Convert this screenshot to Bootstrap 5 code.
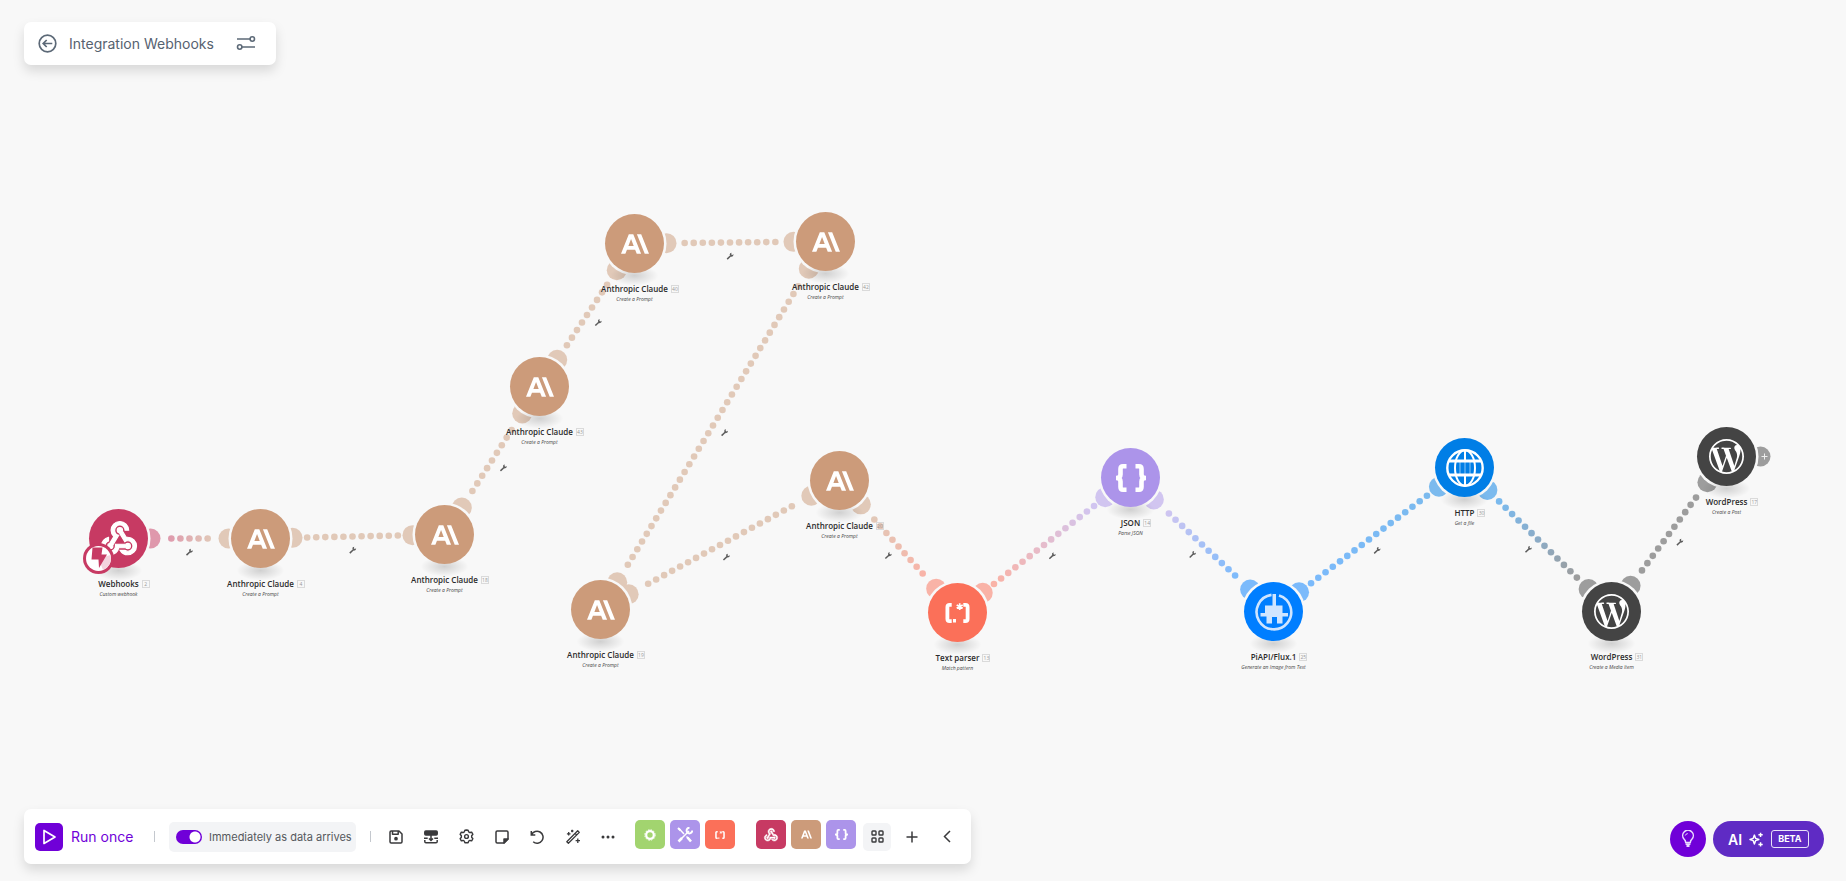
<!DOCTYPE html>
<html lang="en">
<head>
<meta charset="utf-8">
<meta name="viewport" content="width=device-width, initial-scale=1">
<title>Integration Webhooks</title>
<link rel="stylesheet" href="https://cdn.jsdelivr.net/npm/bootstrap@5.3.0/dist/css/bootstrap.min.css">
<style>
  :root { --canvas: #f8f8f8; --violet: #7000d8; --ink: #3a3a3c; }
  body { background: var(--canvas); font-family: Inter, sans-serif; color: var(--ink); }
  button { font: inherit; }
  .app { padding: 22px 22px 17px 24px; pointer-events: none; }
  .app > * { pointer-events: auto; }
  .scene { inset: 0; overflow: hidden; }
  .panel { background: #fff; border-radius: 7px; box-shadow: 0 6px 12px rgba(0, 0, 0, .13); }
  .plain { background: none; border: 0; padding: 0; color: inherit; display: inline-flex; align-items: center; justify-content: center; }
  .plain svg, .tile svg { display: block; }

  .titlebar { height: 43px; padding: 0 20px 0 13px; color: #5c6977; }
  .titlebar h1 { font-size: 14px; line-height: 20px; font-weight: 400; color: #566270; margin: 0 22px 0 11px; }

  .toolbar { width: 947px; height: 55px; padding: 0 11px; }
  .run { width: 100px; color: var(--violet); font-size: 14px; line-height: 20px; gap: 8px; justify-content: flex-start; }
  .run-box { width: 28px; height: 28px; border-radius: 5px; background: var(--violet); color: #fff; }
  .rule { width: 1px; height: 11px; background: #c4c8ce; }
  .run + .rule { margin-left: 19px; }
  .sched { height: 30px; width: 187px; margin: 0 14px; padding: 0 7px; gap: 7px; border-radius: 5px; background: #f3f4f6; font-size: 11px; line-height: 16px; color: #55585c; }
  .sched .form-check-input { width: 26px; height: 14px; margin: 0; border: 0; background-color: var(--violet); flex: none;
    background-image: radial-gradient(circle at 19px 7px, #fff 5px, transparent 6px); background-size: 100% 100%; }
  .tools { width: 236px; margin: 0 15px 0 13px; }
  .tools .plain { width: 24px; height: 28px; }
  .tiles { gap: 5px; margin-top: -4px; }
  .tiles + .tiles { margin-left: 21px; }
  .tile { width: 30px; height: 29px; border: 0; border-radius: 5px; color: #fff; padding: 0; display: flex; align-items: center; justify-content: center; }
  .apps { width: 28px; height: 28px; margin: 0 7px; border-radius: 5px; background: #f3f4f6; }
  .add { width: 28px; height: 28px; }
  .fold { width: 20px; height: 28px; margin-right: 3px; }
  .c-green { background: #a2d46f; } .c-violet { background: #ac94ea; } .c-coral { background: #fb7059; }
  .c-pink { background: #c73a63; } .c-tan { background: #cc9b7a; }

  .corner { gap: 7px; padding-top: 12px; }
  .hint { width: 36px; height: 36px; border-radius: 18px; background: var(--violet); color: #fff; }
  .assist { height: 36px; width: 111px; padding: 0 15px; gap: 7px; border-radius: 18px; background: #5f2bc4; color: #fff; font-size: 14px; font-weight: 600; }
  .beta { width: 39px; height: 18px; border: 1px solid #e9e2f8; border-radius: 3px; font-size: 9px; line-height: 16px; font-weight: 700; }

  .mod { position: absolute; width: 59px; height: 59px; font-family: "Open Sans", sans-serif; }
  .disc { width: 59px; height: 59px; border-radius: 50%; border: 0; padding: 0; color: #fff; }
  .mod-name { font-size: 8px; line-height: 12px; font-weight: 600; color: #2b2b2b; margin-top: 10px; white-space: nowrap; position: relative; }
  .mod-no { position: absolute; left: 100%; top: 2px; margin-left: 3px; width: 8px; height: 8px; border: 1px solid #dadada; font-size: 5px; line-height: 6px; font-weight: 400; color: #999; display: flex; justify-content: center; }
  .mod-sub { font-size: 5px; line-height: 8px; font-style: italic; color: #444; white-space: nowrap; }
  .trigger { position: absolute; left: -6px; top: 34px; }
</style>
</head>
<body>

<svg width="0" height="0" class="position-absolute" aria-hidden="true">
  <symbol id="claude" viewBox="0 0 24 24"><path fill="currentColor" d="M17.304 3.541h-3.672l6.696 16.918H24Zm-10.608 0L0 20.459h3.744l1.37-3.553h7.005l1.369 3.553h3.744L10.536 3.541Zm-.371 10.223 2.291-5.946 2.292 5.946Z"/></symbol>
  <symbol id="webhook" viewBox="0 0 24 24"><path fill="currentColor" stroke="currentColor" stroke-width=".7" d="M10 15h5.88c.27-.31.67-.5 1.12-.5.83 0 1.5.67 1.5 1.5s-.67 1.5-1.5 1.5c-.44 0-.84-.19-1.12-.5H11.9c-.46 2.28-2.48 4-4.9 4-2.76 0-5-2.24-5-5 0-2.42 1.72-4.44 4-4.9v2.07c-1.16.41-2 1.53-2 2.83 0 1.65 1.35 3 3 3s3-1.35 3-3v-1zm2.5-11c1.65 0 3 1.35 3 3h2c0-2.76-2.24-5-5-5s-5 2.24-5 5c0 1.43.6 2.71 1.55 3.62l-2.35 3.9c-.68.14-1.2.75-1.2 1.48 0 .83.67 1.5 1.5 1.5s1.5-.67 1.5-1.5c0-.16-.02-.31-.07-.45l3.38-5.63C10.49 9.61 9.5 8.42 9.5 7c0-1.65 1.35-3 3-3zm4.5 9c-.64 0-1.23.2-1.72.54l-3.05-5.07C11.53 8.35 11 7.74 11 7c0-.83.67-1.5 1.5-1.5S14 6.17 14 7c0 .15-.02.29-.06.43l2.19 3.65c.28-.05.57-.08.87-.08 2.76 0 5 2.24 5 5s-2.24 5-5 5c-1.85 0-3.47-1.01-4.33-2.5h2.67c.48.32 1.05.5 1.66.5 1.65 0 3-1.35 3-3s-1.35-3-3-3z"/></symbol>
  <symbol id="wordpress" viewBox="0 0 24 24"><path fill="currentColor" d="M21.469 6.825c.84 1.537 1.318 3.3 1.318 5.175 0 3.979-2.156 7.456-5.363 9.325l3.295-9.527c.615-1.54.82-2.771.82-3.864 0-.405-.026-.78-.07-1.11m-7.981.105c.647-.03 1.232-.105 1.232-.105.582-.075.514-.93-.067-.899 0 0-1.755.135-2.88.135-1.064 0-2.85-.15-2.85-.15-.585-.03-.661.855-.075.885 0 0 .54.061 1.125.09l1.68 4.605-2.37 7.08L5.354 6.9c.649-.03 1.234-.1 1.234-.1.585-.075.516-.93-.065-.896 0 0-1.746.138-2.874.138-.2 0-.438-.008-.69-.015C4.911 3.15 8.235 1.215 12 1.215c2.809 0 5.365 1.072 7.286 2.833-.046-.003-.091-.009-.141-.009-1.06 0-1.812.923-1.812 1.914 0 .89.513 1.643 1.06 2.531.411.72.89 1.643.89 2.977 0 .915-.354 1.994-.821 3.479l-1.075 3.585-3.9-11.61.001.014zM12 22.784c-1.059 0-2.081-.153-3.048-.437l3.237-9.406 3.315 9.087c.024.053.05.101.078.149-1.12.393-2.325.609-3.582.609M1.211 12c0-1.564.336-3.05.935-4.39L7.29 21.709C3.694 19.96 1.212 16.271 1.211 12M12 0C5.385 0 0 5.385 0 12s5.385 12 12 12 12-5.385 12-12S18.615 0 12 0"/></symbol>
  <symbol id="braces" viewBox="0 0 30 28"><path fill="none" stroke="currentColor" stroke-width="4.600" stroke-linejoin="round" d="M10.500 2.300H7Q4.500 2.300 4.500 5V10.500Q4.500 14 0 14Q4.500 14 4.500 17.500V23Q4.500 25.700 7 25.700H10.500M19.500 2.300H23Q25.500 2.300 25.500 5V10.500Q25.500 14 30 14Q25.500 14 25.500 17.500V23Q25.500 25.700 23 25.700H19.500"/></symbol>
  <symbol id="regex" viewBox="0 0 24 20"><path fill="none" stroke="currentColor" stroke-width="3.800" d="M6.200 1.900H4Q1.900 1.900 1.900 4V16Q1.900 18.100 4 18.100H6.200M17.800 1.900H20Q22.100 1.900 22.100 4V16Q22.100 18.100 20 18.100H17.800"/><path fill="currentColor" d="M7.500 16h3v3.500h-3z"/><path stroke="currentColor" stroke-width="1.700" d="M14.200.2v6.800M11.200 1.900l6 3.400M17.200 1.900l-6 3.400"/></symbol>
  <symbol id="globe" viewBox="0 0 38 38"><g fill="none" stroke="currentColor"><circle cx="19" cy="19" r="17.700" stroke-width="2.400"/><ellipse cx="19" cy="19" rx="10" ry="17.700" stroke-width="2"/><path stroke-width="3" d="M3 12h32M3 26h32"/><path stroke-width="2" d="M19 1.500V12M19 26v10.500"/><path stroke-width=".8" opacity=".7" d="M14 13v12M19 13v12M24 13v12"/></g></symbol>
  <symbol id="plug" viewBox="0 0 38 38"><g color="#cfe5ff"><path fill="none" stroke="currentColor" stroke-width="2.600" d="M16.500 1.900A17.300 17.300 0 1 0 24 2.500"/><path fill="currentColor" d="M17.500 1h3.500v11.500h6.500V20H33v3.500h-5.500v7H22V24h-5v6.500h-5.500v-7H5.500V20H10v-7.500h7.500z"/></g></symbol>
  <symbol id="wrench" viewBox="0 0 8 8"><path fill="none" stroke="#5c5c5c" stroke-width="1.500" d="M1 7 4.800 3.400"/><path fill="#5c5c5c" d="M3.600 2.600Q3.300.8 5.500.7L5 2.200l1 .8L7.400 2.200Q7.500 4.700 5 4.600z"/></symbol>
</svg>

<div class="scene position-absolute" id="scene">
  <svg id="wires" class="position-absolute w-100 h-100" aria-hidden="true">
    <defs id="defs"><radialGradient id="shade"><stop offset="0" stop-opacity=".16"/><stop offset=".5" stop-opacity=".08"/><stop offset="1" stop-opacity="0"/></radialGradient></defs>
  </svg>
</div>

<div class="app position-relative min-vh-100 d-flex flex-column justify-content-between align-items-stretch">
  <header class="titlebar panel d-flex align-items-center align-self-start">
    <button class="plain" aria-label="Back"><svg width="21" height="21" viewBox="0 0 21 21" fill="none" stroke="currentColor" stroke-width="1.700"><circle cx="10.500" cy="10.500" r="8.300"/><path d="M15.300 10.500H6.500M9.700 7 6.200 10.500l3.500 3.500"/></svg></button>
    <h1>Integration Webhooks</h1>
    <button class="plain" aria-label="Scenario options"><svg width="20" height="18" viewBox="0 0 20 18" fill="none" stroke="currentColor" stroke-width="1.600"><path d="M1 4h13M6 12h13"/><circle cx="16.300" cy="4" r="2.200"/><circle cx="3.700" cy="12" r="2.200"/></svg></button>
  </header>

  <footer class="d-flex justify-content-between align-items-start">
    <div class="toolbar panel d-flex align-items-center">
      <button class="plain run"><span class="run-box d-flex align-items-center justify-content-center"><svg width="16" height="18" viewBox="0 0 16 18" fill="none" stroke="currentColor" stroke-width="1.700" stroke-linejoin="round"><path d="M3 2.500v13L14 9z"/></svg></span><span class="text-nowrap">Run once</span></button>
      <span class="rule"></span>
      <label class="sched d-flex align-items-center"><input class="form-check-input rounded-pill" type="checkbox" role="switch" checked><span class="text-nowrap">Immediately as data arrives</span></label>
      <span class="rule"></span>
      <div class="tools d-flex align-items-center justify-content-between">
        <button class="plain" aria-label="Save"><svg width="14" height="14" viewBox="0 0 14 14" fill="none" stroke="currentColor" stroke-width="1.500" stroke-linejoin="round"><path d="M1 2.200Q1 1 2.200 1H10l3 3v7.800Q13 13 11.800 13H2.200Q1 13 1 11.800zM3.500 1v3.300h5.700V1"/><circle cx="7" cy="8.700" r="1.100" fill="currentColor"/></svg></button>
        <button class="plain" aria-label="Auto-align"><svg width="16" height="14" viewBox="0 0 16 14" fill="none" stroke="currentColor" stroke-width="1.500"><rect x="1.800" y="1" width="12.400" height="4" rx="1" fill="currentColor"/><path d="M8 5v5M6 8.500 8 10.500l2-2M1 8.200h3.700M11.300 8.200H15M1.800 10v1.500Q1.800 12.800 3 12.800h10q1.200 0 1.200-1.300V10"/></svg></button>
        <button class="plain" aria-label="Settings"><svg width="15" height="15" viewBox="0 0 16 16" fill="none" stroke="currentColor" stroke-width="1.500" stroke-linejoin="round"><path d="m8 1 1.700.3.700 1.900 1.100.6 2-.4 1.300 2.200L13.500 7.200v1.600l1.300 1.600-1.300 2.200-2-.4-1.100.6-.7 1.900H6.300l-.7-1.900-1.100-.6-2 .4-1.300-2.200 1.300-1.600V7.200L1.200 5.600l1.300-2.200 2 .4 1.100-.6.700-1.900z"/><circle cx="8" cy="8" r="2"/></svg></button>
        <button class="plain" aria-label="Notes"><svg width="14" height="14" viewBox="0 0 14 14" fill="none" stroke="currentColor" stroke-width="1.500" stroke-linejoin="round"><path d="M13 9V2.200Q13 1 11.800 1H2.200Q1 1 1 2.200v9.600Q1 13 2.200 13H9z"/><path d="M13 9H9v4z" fill="currentColor"/></svg></button>
        <button class="plain" aria-label="Undo"><svg width="14" height="14" viewBox="0 0 14 14" fill="none" stroke="currentColor" stroke-width="1.500"><path d="M1.300 1v4h4M1.600 4.700A6 6 0 1 1 3.200 11.800"/></svg></button>
        <button class="plain" aria-label="Magic wand"><svg width="16" height="16" viewBox="0 0 16 16" fill="none" stroke="currentColor" stroke-width="1.300" stroke-linejoin="round"><path d="M1.800 12.700 12.700 1.800l1.600 1.600L3.400 14.300zM10 4.200l1.800 1.800"/><path d="M3.700 3v3.600M1.900 4.800h3.600M12.800 9.500v4.400M10.600 11.700H15M7.200.8v2.400M6 2h2.400"/></svg></button>
        <button class="plain" aria-label="More"><svg width="14" height="4" viewBox="0 0 14 4" fill="currentColor"><circle cx="2" cy="2" r="1.500"/><circle cx="7" cy="2" r="1.500"/><circle cx="12" cy="2" r="1.500"/></svg></button>
      </div>
      <div class="tiles d-flex">
        <button class="tile c-green" aria-label="Flow control"><svg width="12" height="12" viewBox="0 0 12 12" fill="none" stroke="currentColor"><circle cx="6" cy="6" r="3.800" stroke-width="2.200"/><circle cx="6" cy="6" r="5.200" stroke-dasharray="1.600 1.120"/></svg></button>
        <button class="tile c-violet" aria-label="Tools"><svg width="16" height="16" viewBox="0 0 16 16" fill="none" stroke="currentColor"><path stroke-width="1.500" d="M2 1.500 7 7m2.500 2.500L13 13M2 14l10-10"/><path stroke-width="2.600" d="m10.500 10.500 3.500 4M1.500 14.500 5 11"/><path stroke-width="2" d="M1 1l2.500 2.500M12.500.8A2.800 2.800 0 1 0 15.200 3.500"/></svg></button>
        <button class="tile c-coral" aria-label="Text parser"><svg width="10" height="8"><use href="#regex"/></svg></button>
      </div>
      <div class="tiles d-flex">
        <button class="tile c-pink" aria-label="Webhooks"><svg width="16" height="16"><use href="#webhook"/></svg></button>
        <button class="tile c-tan" aria-label="Anthropic Claude"><svg width="11" height="11"><use href="#claude"/></svg></button>
        <button class="tile c-violet" aria-label="JSON"><svg width="13" height="11"><use href="#braces"/></svg></button>
      </div>
      <button class="plain apps" aria-label="All apps"><svg width="13" height="13" viewBox="0 0 13 13" fill="none" stroke="currentColor" stroke-width="1.400"><rect x="1" y="1" width="4" height="4" rx=".8"/><rect x="8" y="1" width="4" height="4" rx=".8"/><rect x="1" y="8" width="4" height="4" rx=".8"/><rect x="8" y="8" width="4" height="4" rx=".8"/></svg></button>
      <button class="plain add" aria-label="Add"><svg width="12" height="12" viewBox="0 0 12 12" stroke="currentColor" stroke-width="1.500"><path d="M6 .5v11M.5 6h11"/></svg></button>
      <button class="plain fold ms-auto" aria-label="Collapse"><svg width="8" height="13" viewBox="0 0 8 13" fill="none" stroke="currentColor" stroke-width="1.500"><path d="M7 1 1.500 6.500 7 12"/></svg></button>
    </div>
    <div class="corner d-flex">
      <button class="plain hint" aria-label="Tips"><svg width="14" height="18" viewBox="0 0 14 18" fill="none" stroke="#eadcff" stroke-width="1.500"><path d="M4.700 12.500Q4.600 10.500 3 9A5.300 5.300 0 1 1 11 9Q9.400 10.500 9.300 12.500z"/><path d="M4.600 14.200h4.800M5.500 16h3" stroke-width="1.800"/><path d="M4.300 5.500A2.700 2.700 0 0 1 6.700 3.600" stroke-width="1"/></svg></button>
      <button class="plain assist"><span>AI</span><svg width="15" height="15" viewBox="0 0 15 15" fill="none" stroke="currentColor" stroke-width="1.500" stroke-linejoin="round"><path d="M5.500 3 6.700 6.300 10 7.500 6.700 8.700 5.500 12 4.300 8.700 1 7.500 4.300 6.300z"/><path d="M11.800.5v4.400M9.600 2.700H14M11.800 10.300v4.400M9.600 12.500H14"/></svg><span class="beta">BETA</span></button>
    </div>
  </footer>
</div>

<script src="https://cdn.jsdelivr.net/npm/bootstrap@5.3.0/dist/js/bootstrap.bundle.min.js"></script>
<script>
  const claude = (no, x, y) => ({ no, x, y, name: 'Anthropic Claude', sub: 'Create a Prompt', color: '#cc9b7a', icon: 'claude', w: 28, h: 28 });
  const modules = [
    { no: 2, x: 118, y: 538, name: 'Webhooks', sub: 'Custom webhook', color: '#c73a63', icon: 'webhook', w: 42, h: 42 },
    claude(4, 260, 538), claude(18, 444, 534), claude(43, 539, 386), claude(40, 634, 243), claude(42, 825, 241),
    claude(19, 600, 609), claude(20, 839, 480),
    { no: 13, x: 957, y: 612, name: 'Text parser', sub: 'Match pattern', color: '#fb7059', icon: 'regex', w: 25, h: 20 },
    { no: 14, x: 1130, y: 477, name: 'JSON', sub: 'Parse JSON', color: '#ac94ea', icon: 'braces', w: 30, h: 28 },
    { no: 25, x: 1273, y: 611, name: 'PiAPI/Flux.1', sub: 'Generate an Image from Text', color: '#007eff', icon: 'plug', w: 38, h: 38 },
    { no: 30, x: 1464, y: 467, name: 'HTTP', sub: 'Get a file', color: '#007ee6', icon: 'globe', w: 38, h: 38 },
    { no: 31, x: 1611, y: 611, name: 'WordPress', sub: 'Create a Media Item', color: '#444444', icon: 'wordpress', w: 35, h: 35 },
    { no: 17, x: 1726, y: 456, name: 'WordPress', sub: 'Create a Post', color: '#444444', icon: 'wordpress', w: 35, h: 35 }
  ];
  // from, to, number of dots
  const links = [[2,4,5],[4,18,11],[18,43,9],[43,40,9],[40,42,11],[42,19,37],[19,20,19],[20,13,9],[13,14,15],[14,25,11],[25,30,17],[30,31,13],[31,17,11]];
  const byNo = Object.fromEntries(modules.map(m => [m.no, m]));
  let defs = '', dots = '', ears = '', wrenches = '', rings = '', shades = '';

  links.forEach(([from, to, n], i) => {
    const a = byNo[from], b = byNo[to], dx = b.x - a.x, dy = b.y - a.y, len = Math.hypot(dx, dy), ux = dx / len, uy = dy / len;
    defs += `<linearGradient id="g${i}" gradientUnits="userSpaceOnUse" x1="${a.x + ux * 48}" y1="${a.y + uy * 48}" x2="${b.x - ux * 48}" y2="${b.y - uy * 48}"><stop stop-color="${a.color}"/><stop offset="1" stop-color="${b.color}"/></linearGradient>`;
    const start = (len - (n - 1) * 9.07) / 2;
    for (let k = 0; k < n; k++) {
      const d = start + k * 9.07;
      dots += `<circle cx="${a.x + ux * d}" cy="${a.y + uy * d}" r="3.300" fill="url(#g${i})"/>`;
    }
    ears += `<circle cx="${a.x + ux * 32}" cy="${a.y + uy * 32}" r="10" fill="${a.color}"/><circle cx="${b.x - ux * 32}" cy="${b.y - uy * 32}" r="10" fill="${b.color}"/>`;
    const side = dx > 0 ? 1 : -1;
    wrenches += `<use href="#wrench" x="${(a.x + b.x) / 2 - uy * 13.6 * side - 4}" y="${(a.y + b.y) / 2 + ux * 13.6 * side - 4}" width="8" height="8"/>`;
  });
  modules.forEach(m => {
    rings += `<circle cx="${m.x}" cy="${m.y}" r="32" fill="#f8f8f8"/>`;
    shades += `<ellipse cx="${m.x}" cy="${m.y + 32}" rx="24" ry="10" fill="url(#shade)"/>`;
  });
  const last = byNo[17];
  ears += `<circle cx="${last.x + 34}" cy="${last.y}" r="10" fill="#444"/>`;
  document.getElementById('defs').insertAdjacentHTML('beforeend', defs);
  document.getElementById('wires').insertAdjacentHTML('beforeend',
    `<g transform="translate(.5 .5)"><g opacity=".5">${ears}${dots}</g>${rings}${shades}${wrenches}<path d="M${last.x + 35} ${last.y}h6m-3-3v6" stroke="#eee"/></g>`);

  const bolt = `<svg class="trigger" width="31" height="31" viewBox="0 0 31 31"><circle cx="15.500" cy="15.500" r="15.500" fill="#c73a63"/><circle cx="15.500" cy="15.500" r="12.500" fill="#fff"/><path d="M15.500 15.500l12-3.500a12.500 12.500 0 0 1-7.500 15z" fill="#f3d3dd"/><path d="M9.500 4.500h10l-1 7h5.500l-8 13.500-.5-8.500H8.500z" fill="#c73a63"/></svg>`;
  document.getElementById('scene').insertAdjacentHTML('beforeend', modules.map(m => `
    <div class="mod d-flex flex-column align-items-center" style="left:${m.x - 29}px;top:${m.y - 29}px">
      <button class="disc flex-shrink-0 d-flex align-items-center justify-content-center" style="background:${m.color}" aria-label="${m.name}"><svg width="${m.w}" height="${m.h}"><use href="#${m.icon}"/></svg></button>
      ${m.no === 2 ? bolt : ''}
      <div class="mod-name">${m.name}<span class="mod-no">${m.no}</span></div>
      <div class="mod-sub">${m.sub}</div>
    </div>`).join(''));
</script>
</body>
</html>
